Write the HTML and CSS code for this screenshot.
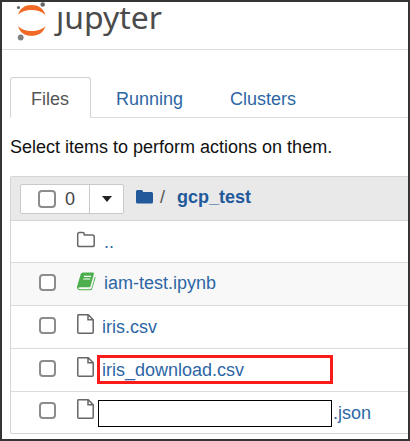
FILE: index.html
```html
<!DOCTYPE html>
<html lang="en">
<head>
<meta charset="utf-8">
<title>Jupyter</title>
<link rel="stylesheet" href="styles.css">
</head>
<body>
<header class="top">
  <svg class="logo" width="30" height="38" viewBox="0 0 30 38">
    <path d="M2 13C4 6 9 3 15.500 3s12 3 14 10C26 9.500 21 8 15.500 8S5 9.500 2 13zM2 24c2 7 7 9.800 13.500 9.800s12-2.800 14-9.800c-3 3.500-8 5-14 5s-10.500-1.500-13.500-5z" fill="#f06a25"/>
    <circle cx="2.500" cy="5.500" r="1.600" fill="#666"/><circle cx="26.700" cy="2.500" r="2.300" fill="#666"/><circle cx="4.700" cy="35.500" r="2.900" fill="#808080"/>
  </svg>
  <svg class="wordmark" width="112" height="40"><text x="2" y="27" textLength="106" lengthAdjust="spacingAndGlyphs">ȷupyter</text></svg>
</header>
<main class="content">
  <nav class="tabs">
    <a class="tab active">Files</a>
    <a class="tab">Running</a>
    <a class="tab">Clusters</a>
  </nav>
  <p class="hint">Select items to perform actions on them.</p>
  <section class="list">
    <div class="head">
      <div class="group"><span class="select"><i class="check"></i><span>0</span></span><span class="drop"><i class="caret"></i></span></div>
      <svg class="home" width="18" height="16" viewBox="0 0 18 16"><path d="M0 2.500Q0 1 1.500 1h4Q7 1 7 2.500V3h8.500Q17 3 17 4.500v8.500q0 1.500-1.500 1.500h-14Q0 14.500 0 13z" fill="#21599b"/></svg>
      <span class="slash">/</span><b class="path">gcp_test</b>
    </div>
    <div class="row">
      <span class="slot"></span>
      <svg class="icon" width="22" height="22" viewBox="0 0 22 22"><path d="M1.700 5.200q0-1.800 1.800-1.800h3.200q1.600 0 1.600 1.500V6h8q1.900 0 1.900 1.900v7.800q0 1.900-1.900 1.900H3.600q-1.900 0-1.900-1.900z" fill="none" stroke="#666" stroke-width="1.500"/></svg>
      <span class="name up">..</span>
    </div>
    <div class="row shade">
      <i class="check"></i>
      <svg class="icon book" width="22" height="22" viewBox="0 0 22 22"><path d="M7 1.500h10q1.200.2.900 1.500l-3.300 12q-.3 1.200-1.500 1.200H4q-1.400 0-1.700 1 .2 1 1.700 1h9.700q1.600 0 2-1.500l3.300-11.500q.8.800.4 2L16.200 17.700q-.5 1.500-2.400 1.500H3.500q-2.600-.5-2.500-3.400L4.600 3.500Q5.200 1.600 7 1.500z" fill="#4cae4c"/><path d="M8 5.400h7M7.300 8h7" stroke="#fff" stroke-width="1.100"/></svg>
      <span class="name notebook">iam-test.ipynb</span>
    </div>
    <div class="row">
      <i class="check"></i>
      <svg class="icon file" width="22" height="22" viewBox="0 0 22 22"><path d="M2.800.7h9.400l5 5v12.600q0 1-1 1H2.800q-1 0-1-1V1.700q0-1 1-1zM12 .7v5.100h5.200" fill="none" stroke="#666" stroke-width="1.500"/></svg>
      <span class="name">iris.csv</span>
    </div>
    <div class="row">
      <i class="check"></i>
      <svg class="icon file" width="22" height="22" viewBox="0 0 22 22"><path d="M2.800.7h9.400l5 5v12.600q0 1-1 1H2.800q-1 0-1-1V1.700q0-1 1-1zM12 .7v5.100h5.200" fill="none" stroke="#666" stroke-width="1.500"/></svg>
      <span class="name">iris_download.csv</span>
      <span class="highlight"></span>
    </div>
    <div class="row last">
      <i class="check"></i>
      <svg class="icon file" width="22" height="22" viewBox="0 0 22 22"><path d="M2.800.7h9.400l5 5v12.600q0 1-1 1H2.800q-1 0-1-1V1.700q0-1 1-1zM12 .7v5.100h5.200" fill="none" stroke="#666" stroke-width="1.500"/></svg>
      <span class="mask"></span>
      <span class="name json">.json</span>
    </div>
  </section>
</main>
</body>
</html>
```
FILE: styles.css
```css
* { box-sizing: border-box; }
html { height: 100%; }
body {
  margin: 0;
  width: 410px;
  height: 441px;
  overflow: hidden;
  border: 2px solid #353535;
  background: #fff;
  font: 18px/24px "Liberation Sans", Arial, sans-serif;
  color: #111;
}
.top { display: flex; height: 48px; padding-left: 14px; border-bottom: 1px solid #dedede; }
.logo { flex: none; overflow: visible; }
.wordmark { margin-left: 8px; overflow: visible; font: 31px "Noto Sans", sans-serif; fill: #4b4b4b; }
.content { padding: 27px 0 0 8px; }
.tabs { display: flex; height: 41px; border-bottom: 1px solid #dcdcdc; }
.tab { height: 41px; padding: 9px 22px 0 20px; border: 1px solid transparent; color: #2d66a5; white-space: nowrap; }
.tab + .tab { padding: 9px 21px 0 24px; }
.tab.active { width: 81px; border-color: #d2d2d2; border-bottom-color: #fff; border-radius: 3px 3px 0 0; color: #555; }
.hint { margin: 17px 0 0; height: 41px; white-space: nowrap; }
.list { height: 258px; border: 1px solid #d5d5d5; border-right: 0; border-radius: 2px 0 0 2px; }
.head { display: flex; align-items: center; height: 44px; padding-left: 9px; background: #e9e9e9; border-bottom: 1px solid #d5d5d5; }
.group { display: flex; height: 30px; width: 104px; border: 1px solid #c9c9c9; border-radius: 2px; background: #fff; color: #444; }
.select { display: flex; align-items: center; gap: 9px; width: 69px; padding-left: 17px; border-right: 1px solid #c9c9c9; }
.drop { display: flex; flex: 1; align-items: center; justify-content: center; }
.caret { border: 5px solid transparent; border-top: 6px solid #222; border-bottom: 0; }
.check { flex: none; width: 18px; height: 18px; border: 2px solid #8c8c8c; border-radius: 4px; background: #fff; }
.row .check { width: 17px; height: 17px; margin: -1px 1px 0 0; }
.home { margin: -4px 0 0 12px; }
.slash { margin: -4px 0 0 6px; color: #555; }
.path { margin: -4px 0 0 12px; color: #21599b; }
.row { position: relative; display: flex; align-items: center; height: 43px; padding: 0 0 3px 28px; border-bottom: 1px solid #dcdcdc; }
.row:nth-child(2) { height: 42px; }
.shade { background: #f8f8f8; }
.row.last { height: 41px; border: 0; }
.slot { width: 18px; }
.icon { flex: none; margin-left: 19px; }
.book { margin-top: -1px; }
.file { margin-top: -2px; }
.name { margin-left: 4px; padding-top: 3px; color: #2d66a5; white-space: nowrap; }
.notebook { margin-left: 6px; padding-top: 1px; }
.up { margin-left: 6px; }
.highlight { position: absolute; left: 86px; top: 6px; width: 236px; height: 29px; border: 3px solid #fb1b1b; }
.mask { width: 234px; height: 27px; margin-top: 5px; border: 1px solid #000; background: #fff; }
.json { margin-left: 1px; }
```
